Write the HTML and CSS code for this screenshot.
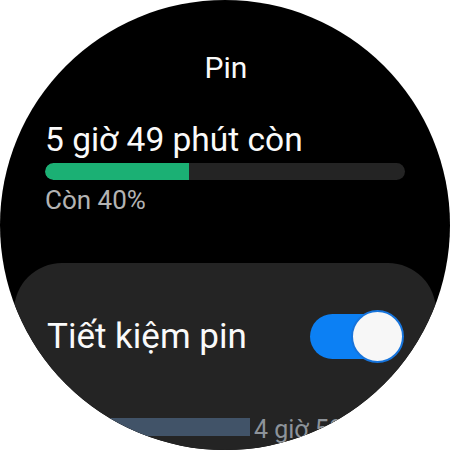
FILE: index.html
```html
<!DOCTYPE html>
<html lang="vi">
<head>
<meta charset="utf-8">
<title>Pin</title>
<link rel="stylesheet" href="styles.css">
</head>
<body>
<div class="watch">
  <div class="title">Pin</div>
  <div class="status">
    <div class="remaining">5 giờ 49 phút còn</div>
    <div class="meter"><div class="meter-fill" style="width:40%"></div></div>
    <div class="percent">Còn 40%</div>
  </div>
  <div class="card">
    <div class="row">
      <div class="row-label">Tiết kiệm pin</div>
      <div class="switch"><div class="switch-track"></div><div class="switch-knob"></div></div>
    </div>
    <div class="compare">
      <div class="compare-bar"></div>
      <div class="compare-text">4 giờ 58 phút</div>
    </div>
  </div>
</div>
</body>
</html>
```

FILE: styles.css
```css
html, body {
  margin: 0;
  padding: 0;
  background: #ffffff;
}

.watch {
  width: 450px;
  height: 450px;
  border-radius: 50%;
  background: #000000;
  overflow: hidden;
  font-family: Roboto, "Noto Sans", sans-serif;
  color: #fafafa;
  box-sizing: border-box;
  padding-top: 53px;
}

.title {
  font-size: 30px;
  line-height: 30px;
  text-align: center;
  padding-left: 2px;
}

.status {
  padding: 0 45px;
  margin-top: 40px;
}

.remaining {
  font-size: 33.5px;
  line-height: 33px;
  white-space: nowrap;
}

.meter {
  margin-top: 7px;
  height: 17px;
  border-radius: 9px;
  background: #242424;
  overflow: hidden;
}

.meter-fill {
  height: 100%;
  background: #1bb074;
  border-radius: 9px 0 0 9px;
}

.percent {
  margin-top: 7px;
  font-size: 26px;
  line-height: 26px;
  color: #b3b3b3;
}

.card {
  margin: 50px 14px 0;
  height: 300px;
  background: #242424;
  border-radius: 48px;
  padding: 47px 32px 0 32px;
  box-sizing: border-box;
}

.row {
  display: flex;
  align-items: center;
  justify-content: space-between;
  height: 53px;
}

.row-label {
  font-size: 35px;
  line-height: 35px;
  white-space: nowrap;
  padding-left: 1px;
}

.switch {
  position: relative;
  width: 94px;
  height: 53px;
}

.switch-track {
  position: absolute;
  left: 0;
  top: 4px;
  width: 88px;
  height: 45px;
  border-radius: 23px;
  background: #0c80f4;
}

.switch-knob {
  position: absolute;
  right: 0;
  top: 0;
  width: 53px;
  height: 53px;
  box-sizing: border-box;
  border-radius: 50%;
  background: #f7f7f7;
  border: 2px solid #1674dc;
}

.compare {
  display: flex;
  align-items: flex-start;
  margin-top: 55px;
}

.compare-bar {
  width: 204px;
  height: 18px;
  background: #415368;
  flex: none;
}

.compare-text {
  margin-left: 4px;
  font-size: 25px;
  line-height: 24px;
  color: #8d939a;
  white-space: nowrap;
}
```
